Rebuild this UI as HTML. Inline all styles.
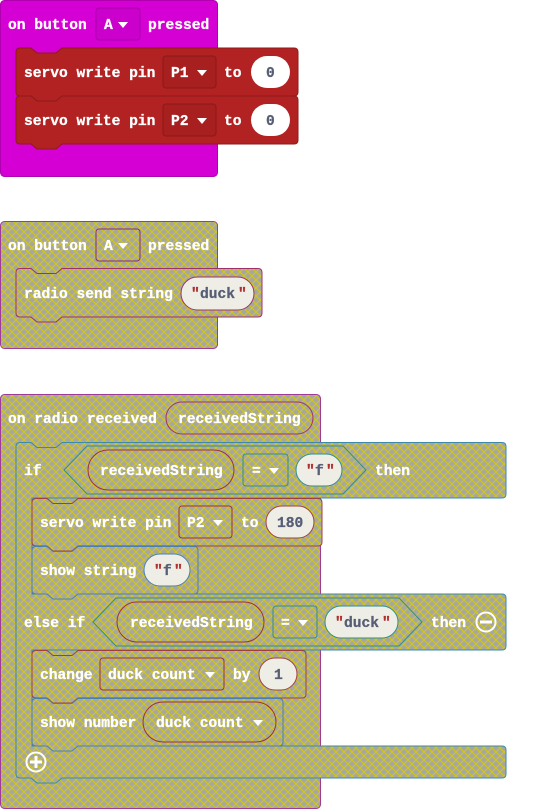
<!DOCTYPE html>
<html><head><meta charset="utf-8"><style>
html,body{margin:0;padding:0;background:#fff;width:558px;height:810px;overflow:hidden}
svg text{font-family:"Liberation Mono",monospace;font-weight:bold;font-size:14.6px;letter-spacing:0;fill:#fff;stroke:#fff;stroke-width:0.3px}
svg text.d{fill:#575e75;stroke:#575e75}
svg text.q{fill:#b03030;stroke:#b03030}
</style></head><body>
<svg width="558" height="810" viewBox="0 0 558 810" xmlns="http://www.w3.org/2000/svg">
<defs>
<pattern id="h" width="8" height="8" patternUnits="userSpaceOnUse">
<rect width="8" height="8" fill="#a7a7a2"/>
<path d="M-1,-1 L9,9 M9,-1 L-1,9" stroke="#d2c814" stroke-width="1.1"/>
</pattern>
</defs>

<!-- Block 1 -->
<rect x="0.5" y="0.5" width="217" height="176" rx="4" fill="#d400d4" stroke="#b000b0"/>
<rect x="96" y="8" width="44" height="32" rx="3" fill="#cc00cc" stroke="#a800a8"/>
<text x="8" y="29">on button</text><text x="104" y="29">A</text><path d="M118,22 h10 l-5,6z" fill="#fff"/><text x="148" y="29">pressed</text>

<path d="M20,48 H31 l6,5 h19 l6,-5 H294 q4,0 4,4 V92 q0,4 -4,4 H62 l-6,5 h-19 l-6,-5 H20 q-4,0 -4,-4 V52 q0,-4 4,-4z" fill="#b22222" stroke="#8e1b1b"/>
<rect x="163" y="56" width="53" height="32" rx="3" fill="#a81f1f" stroke="#8a1a1a"/>
<rect x="251" y="56" width="39" height="32" rx="16" fill="#fff"/>
<text x="24" y="77">servo write pin</text><text x="171" y="77">P1</text><path d="M197,70 h10 l-5,6z" fill="#fff"/><text x="224" y="77">to</text><text class="d" x="266" y="77">0</text>

<path d="M20,96 H31 l6,5 h19 l6,-5 H294 q4,0 4,4 V140 q0,4 -4,4 H62 l-6,5 h-19 l-6,-5 H20 q-4,0 -4,-4 V100 q0,-4 4,-4z" fill="#b22222" stroke="#8e1b1b"/>
<rect x="163" y="104" width="53" height="32" rx="3" fill="#a81f1f" stroke="#8a1a1a"/>
<rect x="251" y="104" width="39" height="32" rx="16" fill="#fff"/>
<text x="24" y="125">servo write pin</text><text x="171" y="125">P2</text><path d="M197,118 h10 l-5,6z" fill="#fff"/><text x="224" y="125">to</text><text class="d" x="266" y="125">0</text>

<!-- Block 2 -->
<rect x="0.5" y="221.5" width="217" height="127" rx="4" fill="url(#h)" stroke="#a03a9a"/>
<rect x="96" y="229" width="44" height="32" rx="3" fill="none" stroke="#8a2a7a"/>
<text x="8" y="250">on button</text><text x="104" y="250">A</text><path d="M118,243 h10 l-5,6z" fill="#fff"/><text x="148" y="250">pressed</text>
<path d="M20,268.5 H31 l6,5 h19 l6,-5 H258 q4,0 4,4 V313 q0,4 -4,4 H62 l-6,5 h-19 l-6,-5 H20 q-4,0 -4,-4 V272.5 q0,-4 4,-4z" fill="url(#h)" stroke="#a0306a"/>
<rect x="181" y="277" width="73" height="33" rx="16.5" fill="#eeeee6" stroke="#a0306a"/>
<text x="24" y="298">radio send string</text><text class="q" x="191" y="298">"</text><text class="d" x="200" y="298">duck</text><text class="q" x="238" y="298">"</text>

<!-- Block 3 -->
<rect x="0.5" y="394.5" width="320" height="414" rx="4" fill="url(#h)" stroke="#a03a9a"/>
<rect x="166" y="402" width="147" height="32" rx="16" fill="none" stroke="#a0306a"/>
<text x="8" y="423">on radio received</text><text x="178" y="423">receivedString</text>

<path d="M20,442.5 H31 l6,5 h19 l6,-5 H502 q4,0 4,4 V494 q0,4 -4,4 H32 V594 H502 q4,0 4,4 V646 q0,4 -4,4 H32 V746 H502 q4,0 4,4 V774 q0,4 -4,4 H62 l-6,5 h-19 l-6,-5 H20 q-4,0 -4,-4 V446.5 q0,-4 4,-4z" fill="url(#h)" stroke="#3a8aa8"/>
<path d="M87,446 H343 l23,24 l-23,24 H87 l-23,-24z" fill="none" stroke="#2f8f8a"/>
<rect x="88" y="450" width="146" height="40" rx="20" fill="none" stroke="#a03040"/>
<rect x="243" y="454" width="45" height="32" rx="3" fill="none" stroke="#2f8f8a"/>
<rect x="296" y="454" width="46" height="32" rx="16" fill="#eeeee6" stroke="#2f8f8a"/>
<text x="24" y="475">if</text><text x="100" y="475">receivedString</text><text x="252" y="475">=</text><path d="M269,468 h10 l-5,6z" fill="#fff"/>
<text class="q" x="306" y="475">"</text><text class="d" x="315" y="475">f</text><text class="q" x="326" y="475">"</text><text x="375" y="475">then</text>

<path d="M36,498.5 H47 l6,5 h19 l6,-5 H318 q4,0 4,4 V542 q0,4 -4,4 H78 l-6,5 h-19 l-6,-5 H36 q-4,0 -4,-4 V502.5 q0,-4 4,-4z" fill="url(#h)" stroke="#a04040"/>
<rect x="179" y="506" width="53" height="32" rx="3" fill="none" stroke="#a03030"/>
<rect x="266" y="506" width="48" height="32" rx="16" fill="#eeeee6" stroke="#a04040"/>
<text x="40" y="527">servo write pin</text><text x="187" y="527">P2</text><path d="M213,520 h10 l-5,6z" fill="#fff"/><text x="241" y="527">to</text><text class="d" x="277" y="527">180</text>

<path d="M36,546.5 H47 l6,5 h19 l6,-5 H194 q4,0 4,4 V590 q0,4 -4,4 H78 l-6,5 h-19 l-6,-5 H36 q-4,0 -4,-4 V550.5 q0,-4 4,-4z" fill="url(#h)" stroke="#4a80b0"/>
<rect x="144" y="554" width="46" height="32" rx="16" fill="#eeeee6" stroke="#4a80b0"/>
<text x="40" y="575">show string</text><text class="q" x="154" y="575">"</text><text class="d" x="163" y="575">f</text><text class="q" x="174" y="575">"</text>

<path d="M116,598 H399 l23,24 l-23,24 H116 l-23,-24z" fill="none" stroke="#2f8f8a"/>
<rect x="117" y="602" width="147" height="40" rx="20" fill="none" stroke="#a03040"/>
<rect x="273" y="606" width="44" height="32" rx="3" fill="none" stroke="#2f8f8a"/>
<rect x="325" y="606" width="73" height="32" rx="16" fill="#eeeee6" stroke="#2f8f8a"/>
<text x="24" y="627">else if</text><text x="130" y="627">receivedString</text><text x="281" y="627">=</text><path d="M298,620 h10 l-5,6z" fill="#fff"/>
<text class="q" x="335" y="627">"</text><text class="d" x="344" y="627">duck</text><text class="q" x="382" y="627">"</text><text x="431" y="627">then</text>
<circle cx="486" cy="622" r="9.5" fill="none" stroke="#fff" stroke-width="2"/><rect x="480" y="620.5" width="12" height="3" fill="#fff"/>

<path d="M36,650.5 H47 l6,5 h19 l6,-5 H302 q4,0 4,4 V694 q0,4 -4,4 H78 l-6,5 h-19 l-6,-5 H36 q-4,0 -4,-4 V654.5 q0,-4 4,-4z" fill="url(#h)" stroke="#a04040"/>
<rect x="100" y="658" width="124" height="32" rx="3" fill="none" stroke="#a03030"/>
<rect x="259" y="658" width="38" height="32" rx="16" fill="#eeeee6" stroke="#a04040"/>
<text x="40" y="679">change</text><text x="108" y="679">duck count</text><path d="M205,672 h10 l-5,6z" fill="#fff"/><text x="233" y="679">by</text><text class="d" x="274" y="679">1</text>

<path d="M36,698.5 H47 l6,5 h19 l6,-5 H279 q4,0 4,4 V742 q0,4 -4,4 H78 l-6,5 h-19 l-6,-5 H36 q-4,0 -4,-4 V702.5 q0,-4 4,-4z" fill="url(#h)" stroke="#4a80b0"/>
<rect x="143" y="702" width="133" height="40" rx="20" fill="none" stroke="#a03030"/>
<text x="40" y="727">show number</text><text x="156" y="727">duck count</text><path d="M253,720 h10 l-5,6z" fill="#fff"/>

<circle cx="36" cy="762" r="9.5" fill="none" stroke="#fff" stroke-width="2"/><rect x="30" y="760.5" width="12" height="3" fill="#fff"/><rect x="34.5" y="756" width="3" height="12" fill="#fff"/>
</svg>
</body></html>
